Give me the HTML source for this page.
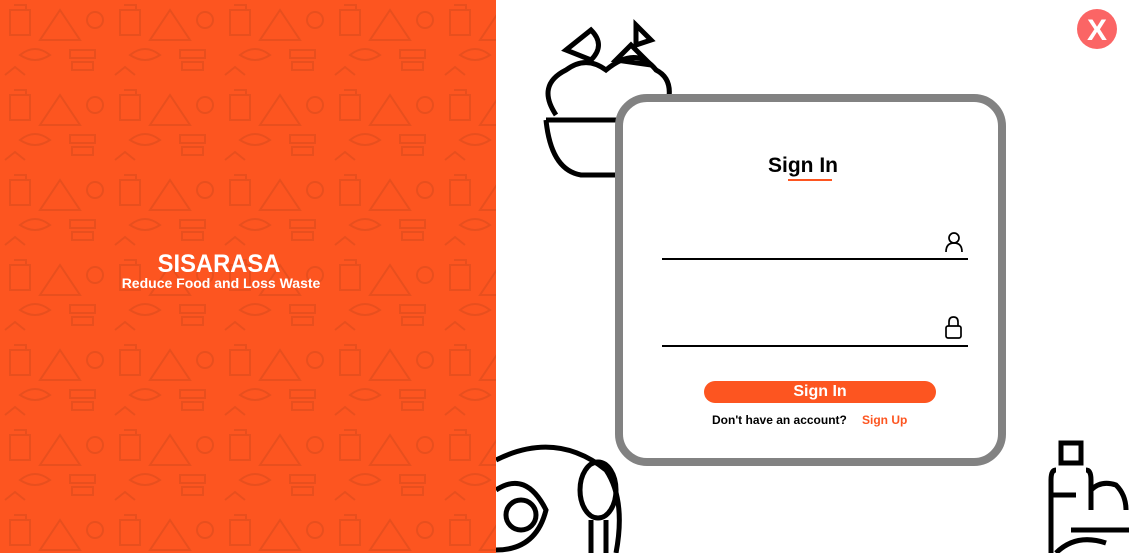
<!DOCTYPE html>
<html><head><meta charset="utf-8"><style>
*{margin:0;padding:0;box-sizing:border-box}
body{width:1129px;height:553px;overflow:hidden;background:#fff;font-family:"Liberation Sans",sans-serif;position:relative}
#left{position:absolute;left:0;top:0;width:496px;height:553px;background:#fd5520}
.brand{position:absolute;left:0;width:496px;text-align:center;color:#fff}
#card{position:absolute;left:615px;top:94px;width:391px;height:372px;border:8px solid #828282;border-radius:32px;background:#fff}
.line{position:absolute;left:662px;width:306px;height:2px;background:#000}
</style></head><body>
<div id="left">
<svg width="496" height="553" style="position:absolute;left:0;top:0">
<defs><pattern id="p" width="110" height="85" patternUnits="userSpaceOnUse">
<g fill="none" stroke="#c8441a" stroke-width="2" opacity="0.4">
<path d="M10 10h20v25h-20z M14 5h12v5"/>
<path d="M60 10l20 30h-40z"/>
<circle cx="95" cy="20" r="8"/>
<path d="M20 55q15-12 30 0q-15 10-30 0z"/>
<path d="M70 50h25v8h-25z M72 62h21v8h-21z"/>
<path d="M5 75l10-8 10 8"/>
</g></pattern></defs>
<rect width="496" height="553" fill="url(#p)"/>
</svg>
<div class="brand" style="top:250px;left:-29px;font-size:25px;font-weight:900;letter-spacing:0px;transform:scaleX(0.95)">SISARASA</div>
<div class="brand" style="top:275px;left:-27px;font-size:14px;font-weight:bold">Reduce Food and Loss Waste</div>
</div>
<svg width="633" height="553" style="position:absolute;left:496px;top:0" fill="none" stroke="#000" stroke-width="5">
<path d="M50 120h90 M50 120q5 50 35 55h40"/>
<path d="M60 115q-20-30 10-45q20-15 40 0q30-25 50 0q20 10 10 40"/>
<path d="M70 50l25-20q15 15 0 30z M140 25l15 15l-15 5z M120 60l15-15 20 20z"/>
<circle cx="25" cy="515" r="15"/>
<path d="M0 460q60-30 110 10q20 30 10 83 M0 490q30-20 50 20q-10 40-50 40"/>
<ellipse cx="102" cy="490" rx="18" ry="28"/><path d="M95 520v33 M110 520v33"/>
<path d="M565 443h20v20h-20z M560 470q-5 0-5 10v73 M590 470q5 0 5 10v30 M555 495h25"/>
<path d="M595 490q10-10 25-5q10 10 10 25 M575 530h58 M560 553q20-20 50-10"/>
</svg>
<svg width="40" height="40" style="position:absolute;left:1077px;top:9px"><circle cx="20" cy="20" r="20" fill="#fb6565"/><text x="20" y="31" text-anchor="middle" font-family="Liberation Sans" font-weight="bold" font-size="30" fill="#fff">X</text></svg>
<div id="card"></div>
<div style="position:absolute;left:768px;top:154px;font-size:21px;font-weight:bold;color:#000">Sign In</div>
<div style="position:absolute;left:788px;top:179px;width:44px;height:2px;background:#fd5520"></div>
<div class="line" style="top:258px"></div>
<div class="line" style="top:345px"></div>
<svg width="22" height="22" style="position:absolute;left:943px;top:231px" fill="none" stroke="#000" stroke-width="1.7"><circle cx="11" cy="7" r="5"/><path d="M3 21q0-9 8-9q8 0 8 9"/></svg>
<svg width="22" height="26" style="position:absolute;left:943px;top:316px" fill="none" stroke="#000" stroke-width="1.7"><rect x="3" y="10" width="15" height="12" rx="2"/><path d="M6 10v-4q0-5 4.5-5q4.5 0 4.5 5v4"/></svg>
<div style="position:absolute;left:704px;top:381px;width:232px;height:22px;border-radius:11px;background:#fd5520;color:#fff;font-weight:bold;font-size:16px;text-align:center;line-height:22px">Sign In</div>
<div style="position:absolute;left:712px;top:413px;font-size:12px;font-weight:bold;color:#000">Don't have an account?</div>
<div style="position:absolute;left:862px;top:413px;font-size:12px;font-weight:bold;color:#fd5520">Sign Up</div>
</body></html>
